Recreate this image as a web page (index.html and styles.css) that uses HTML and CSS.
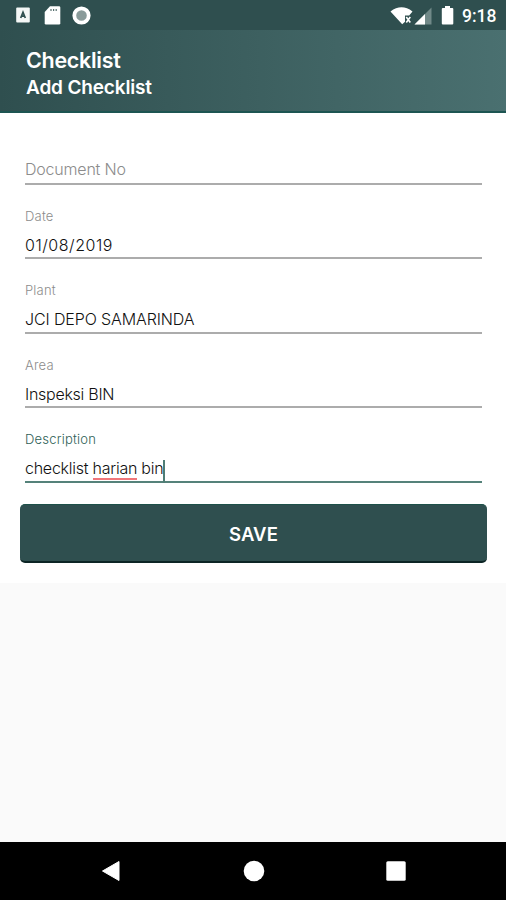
FILE: index.html
```html
<!DOCTYPE html>
<html lang="en">
<head>
<meta charset="utf-8">
<title>Add Checklist</title>
<link rel="stylesheet" href="styles.css">
</head>
<body>
<div class="status">
  <svg class="status-left" width="76" height="20" viewBox="0 0 76 20">
    <rect x="0.2" y="1.500" width="13.600" height="15" rx="1" fill="#f4f7f6"/>
    <path d="M4.700 12 7 6.200 9.300 12M5.500 10.200h3" fill="none" stroke="#2f4f4f" stroke-width="1.700"/>
    <path d="M34 .3h9q1.300 0 1.300 1.300v15.600q0 1.300-1.300 1.300H30q-1.300 0-1.300-1.300V6z" fill="#fff"/>
    <path d="M35 3v2M37.600 3v2M40.200 3v2" stroke="#587170" stroke-width="1.200"/>
    <circle cx="65.500" cy="9.500" r="7.200" fill="#899b9a" stroke="#fff" stroke-width="3.800"/>
  </svg>
  <div class="status-right">
    <svg width="66" height="22" viewBox="0 0 66 22">
      <path d="M.5 5.500Q11.500-2.800 22.500 5.500L19.200 9.500H15v6.200L12.200 18.300z" fill="#fff"/>
      <path d="m16.300 11 4 5.500m0-5.500-4 5.500" stroke="#fff" stroke-width="1.600"/>
      <path d="M24.500 18.500 41.500 1.500v17z" fill="#718988"/>
      <path d="M24.500 18.500 35 8v10.500z" fill="#fff"/>
      <path d="M55 0h5V2h2.300q1 0 1 1v14.500q0 1-1 1h-9.500q-1 0-1-1V3q0-1 1-1H55z" fill="#fff"/>
    </svg>
    <span class="clock">9:18</span>
  </div>
</div>
<header class="header">
  <div class="title">Checklist</div>
  <div class="subtitle">Add Checklist</div>
</header>
<main class="form">
  <div class="field field-empty"><span class="placeholder">Document No</span></div>
  <div class="field"><span class="label">Date</span><span class="value v-date">01/08/2019</span></div>
  <div class="field"><span class="label">Plant</span><span class="value v-plant">JCI DEPO SAMARINDA</span></div>
  <div class="field"><span class="label">Area</span><span class="value v-area">Inspeksi BIN</span></div>
  <div class="field field-active"><span class="label">Description</span><span class="value v-desc">checklist <span class="misspelt">harian</span> bin<i class="caret"></i></span></div>
  <button class="save">SAVE</button>
</main>
<nav class="nav">
  <svg width="20" height="22" viewBox="0 0 20 22"><path d="M1.500 11 18 1.500v19z" fill="#fff" stroke="#fff" stroke-linejoin="round"/></svg>
  <svg width="22" height="22" viewBox="0 0 22 22"><circle cx="11" cy="11" r="10.300" fill="#fff"/></svg>
  <svg width="20" height="22" viewBox="0 0 20 22"><rect x=".3" y="1.300" width="19.400" height="19.400" rx="1.500" fill="#fff"/></svg>
</nav>
</body>
</html>
```
FILE: styles.css
```css
* { box-sizing: border-box; }
body {
  margin: 0;
  height: 900px;
  display: flex;
  flex-direction: column;
  background: #fafafa;
  font-family: Inter, "Liberation Sans", sans-serif;
  overflow: hidden;
}
.status {
  height: 30px;
  flex: none;
  display: flex;
  justify-content: space-between;
  padding: 6px 8px 0 16px;
  background: #2f4f4f;
}
.status-left { flex: none; }
.status-right { display: flex; gap: 6px; }
.clock {
  width: 36px;
  font: 500 17.5px/20px Roboto, sans-serif;
  color: #fff;
  white-space: nowrap;
}
.header {
  height: 83px;
  flex: none;
  padding: 16px 26px 0;
  background: linear-gradient(90deg, #2f4f4f, #4a7070);
  border-bottom: 2px solid #1d5552;
  color: #fff;
  font-weight: 600;
}
.title { font-size: 21.5px; line-height: 29px; letter-spacing: -0.3px; }
.subtitle { font-size: 19px; line-height: 26px; letter-spacing: -0.15px; }
.form {
  height: 470px;
  flex: none;
  padding: 0 19px 0 20px;
  background: #fff;
}
.field {
  height: 74.4px;
  margin: 0 5px;
  display: flex;
  flex-direction: column;
  border-bottom: 2px solid #acacac;
  white-space: nowrap;
}
.field-empty { height: 72px; }
.placeholder {
  padding-top: 45px;
  font-size: 16px;
  line-height: 22px;
  font-weight: 300;
  letter-spacing: -0.2px;
  color: #8c8c8c;
}
.label {
  padding-top: 22px;
  font-size: 13px;
  line-height: 18px;
  font-weight: 300;
  letter-spacing: 0.2px;
  color: #8c8c8c;
}
.value {
  padding-top: 9px;
  font-size: 16px;
  line-height: 22px;
  font-weight: 300;
  color: #111;
}
.v-date { letter-spacing: 0.53px; }
.v-plant { letter-spacing: -0.12px; }
.v-area { letter-spacing: -0.27px; }
.v-desc { letter-spacing: -0.25px; }
.field-active { border-color: #55827a; }
.field-active .label { color: #2f5f57; }
.misspelt { border-bottom: 2px solid #f0767a; }
.caret {
  display: inline-block;
  width: 2px;
  height: 23px;
  margin: -4px 0 -5px;
  vertical-align: -4px;
  background: #4f7d75;
}
.save {
  display: block;
  width: 100%;
  height: 59px;
  margin-top: 21.4px;
  padding: 2px 0 0;
  border: 0;
  border-top: 1px solid #1d5149;
  border-bottom: 2px solid #0c2525;
  border-radius: 5px;
  background: #2f4f4f;
  color: #fff;
  font: 600 18.5px/22px Inter, sans-serif;
  letter-spacing: 0.15px;
}
.nav {
  height: 58px;
  flex: none;
  margin-top: auto;
  padding: 0 100px 0 101px;
  display: flex;
  align-items: center;
  justify-content: space-between;
  background: #000;
}
```
